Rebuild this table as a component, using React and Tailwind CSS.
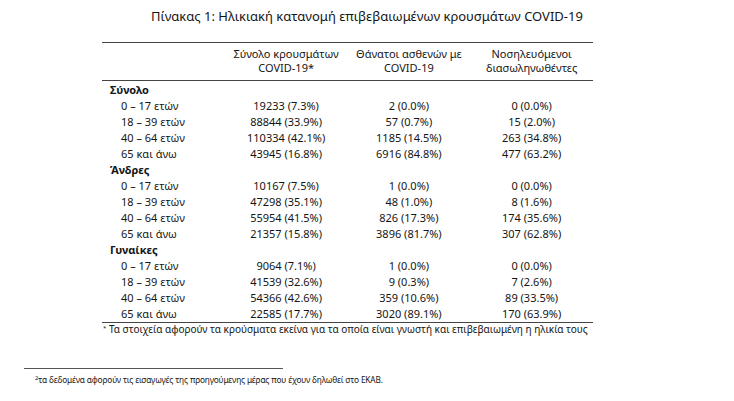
import React from "react";

const groups = [
  {
    name: "Σύνολο",
    rows: [
      ["0 – 17 ετών", "19233 (7.3%)", "2 (0.0%)", "0 (0.0%)"],
      ["18 – 39 ετών", "88844 (33.9%)", "57 (0.7%)", "15 (2.0%)"],
      ["40 – 64 ετών", "110334 (42.1%)", "1185 (14.5%)", "263 (34.8%)"],
      ["65 και άνω", "43945 (16.8%)", "6916 (84.8%)", "477 (63.2%)"],
    ],
  },
  {
    name: "Άνδρες",
    rows: [
      ["0 – 17 ετών", "10167 (7.5%)", "1 (0.0%)", "0 (0.0%)"],
      ["18 – 39 ετών", "47298 (35.1%)", "48 (1.0%)", "8 (1.6%)"],
      ["40 – 64 ετών", "55954 (41.5%)", "826 (17.3%)", "174 (35.6%)"],
      ["65 και άνω", "21357 (15.8%)", "3896 (81.7%)", "307 (62.8%)"],
    ],
  },
  {
    name: "Γυναίκες",
    rows: [
      ["0 – 17 ετών", "9064 (7.1%)", "1 (0.0%)", "0 (0.0%)"],
      ["18 – 39 ετών", "41539 (32.6%)", "9 (0.3%)", "7 (2.6%)"],
      ["40 – 64 ετών", "54366 (42.6%)", "359 (10.6%)", "89 (33.5%)"],
      ["65 και άνω", "22585 (17.7%)", "3020 (89.1%)", "170 (63.9%)"],
    ],
  },
];

export default function App() {
  return (
    <div
      className="w-[734px] h-[401px] bg-white text-[#151515] overflow-hidden"
      style={{ fontFamily: '"Noto Sans", "Open Sans", sans-serif' }}
    >
      <div className="pt-[7px] text-center text-[13px] leading-[18px]">
        Πίνακας 1: Ηλικιακή κατανομή επιβεβαιωμένων κρουσμάτων COVID-19
      </div>
      <div className="ml-[102px] mt-[17px] w-[491px] text-[11px]">
        <div className="grid grid-cols-4 border-t border-b border-[#444] pt-[4px] pb-[5px] leading-[14px] text-center">
          <div></div>
          <div>
            Σύνολο κρουσμάτων
            <br />
            COVID-19*
          </div>
          <div>
            Θάνατοι ασθενών με
            <br />
            COVID-19
          </div>
          <div>
            Νοσηλευόμενοι
            <br />
            διασωληνωθέντες
          </div>
        </div>
        <div className="pt-[1px] border-b border-[#444]">
          {groups.map((g) => (
            <div key={g.name}>
              <div className="h-[16px] leading-[16px] pl-[8px] font-bold">{g.name}</div>
              {g.rows.map((r) => (
                <div key={r[0]} className="grid grid-cols-4 h-[16px] leading-[16px]">
                  <div className="pl-[19px]">{r[0]}</div>
                  <div className="text-center">{r[1]}</div>
                  <div className="text-center">{r[2]}</div>
                  <div className="text-center">{r[3]}</div>
                </div>
              ))}
            </div>
          ))}
        </div>
        <div className="leading-[13px] pl-[1px] text-[10px]">
          <sup className="text-[6px]">*</sup> Τα στοιχεία αφορούν τα κρούσματα εκείνα για τα οποία είναι γνωστή και επιβεβαιωμένη η ηλικία τους
        </div>
      </div>
      <div className="ml-[24px] mt-[32px] w-[259px] border-t border-[#555]"></div>
      <div className="ml-[35px] mt-[5px] text-[8.3px] leading-[12px] tracking-[-0.15px]">
        <sup className="text-[6px]">2</sup>τα δεδομένα αφορούν τις εισαγωγές της προηγούμενης μέρας που έχουν δηλωθεί στο ΕΚΑΒ.
      </div>
    </div>
  );
}
